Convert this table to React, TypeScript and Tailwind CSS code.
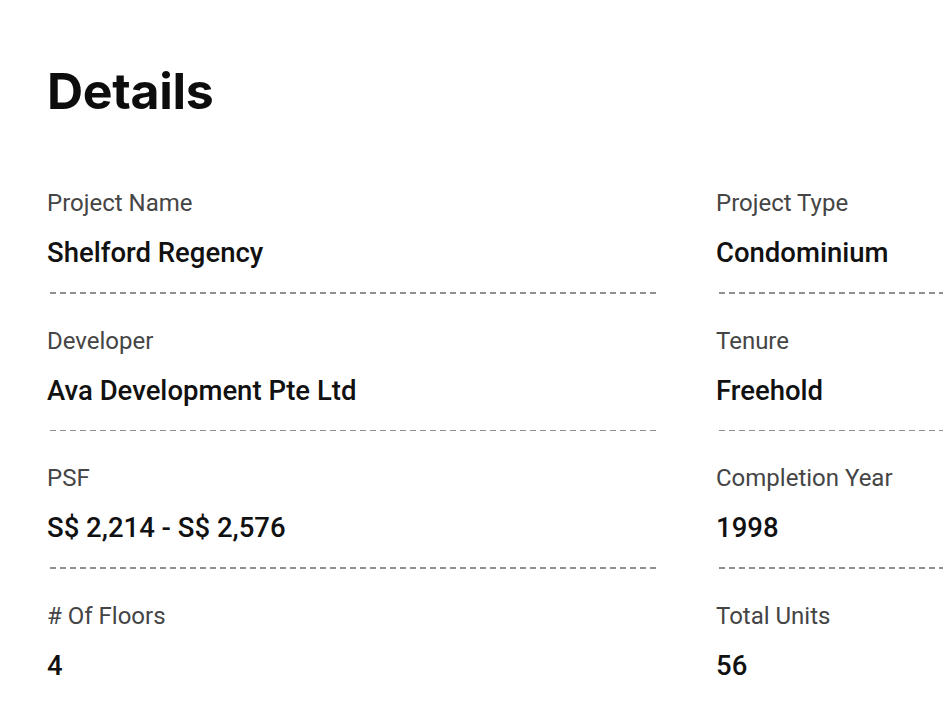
import React from 'react';

const rows: [string, string][][] = [
  [
    ['Project Name', 'Shelford Regency'],
    ['Project Type', 'Condominium'],
  ],
  [
    ['Developer', 'Ava Development Pte Ltd'],
    ['Tenure', 'Freehold'],
  ],
  [
    ['PSF', 'S$ 2,214 - S$ 2,576'],
    ['Completion Year', '1998'],
  ],
  [
    ['# Of Floors', '4'],
    ['Total Units', '56'],
  ],
];

const Field: React.FC<{ label: string; value: string; last: boolean }> = ({ label, value, last }) => (
  <div className="flex flex-col">
    <div className="text-[24px] leading-[28px] text-[#454545]">{label}</div>
    <div className="mt-[19px] text-[27.5px] leading-[34px] font-medium text-[#111]">{value}</div>
    {!last && (
      <div className="mt-[22px] mb-[33px] h-[1.5px] bg-[linear-gradient(to_right,#8f8f8f_65%,transparent_0)] bg-[length:10px_1.5px] bg-[position:3px_0]" />
    )}
  </div>
);

const App: React.FC = () => {
  return (
    <div className="w-[943px] h-[717px] overflow-hidden bg-white font-['Roboto',sans-serif]">
      <div className="pl-[47px] pt-[61px]">
        <h2 className="text-[50px] leading-[60px] font-bold text-[#0d0d0d] font-['Inter',sans-serif] tracking-[-0.3px]">
          Details
        </h2>
        <div className="mt-[68px] grid grid-cols-[610px_610px] gap-x-[59px]">
          {rows.map((row, i) =>
            row.map(([label, value]) => (
              <Field key={label} label={label} value={value} last={i === rows.length - 1} />
            ))
          )}
        </div>
      </div>
    </div>
  );
};

export default App;
